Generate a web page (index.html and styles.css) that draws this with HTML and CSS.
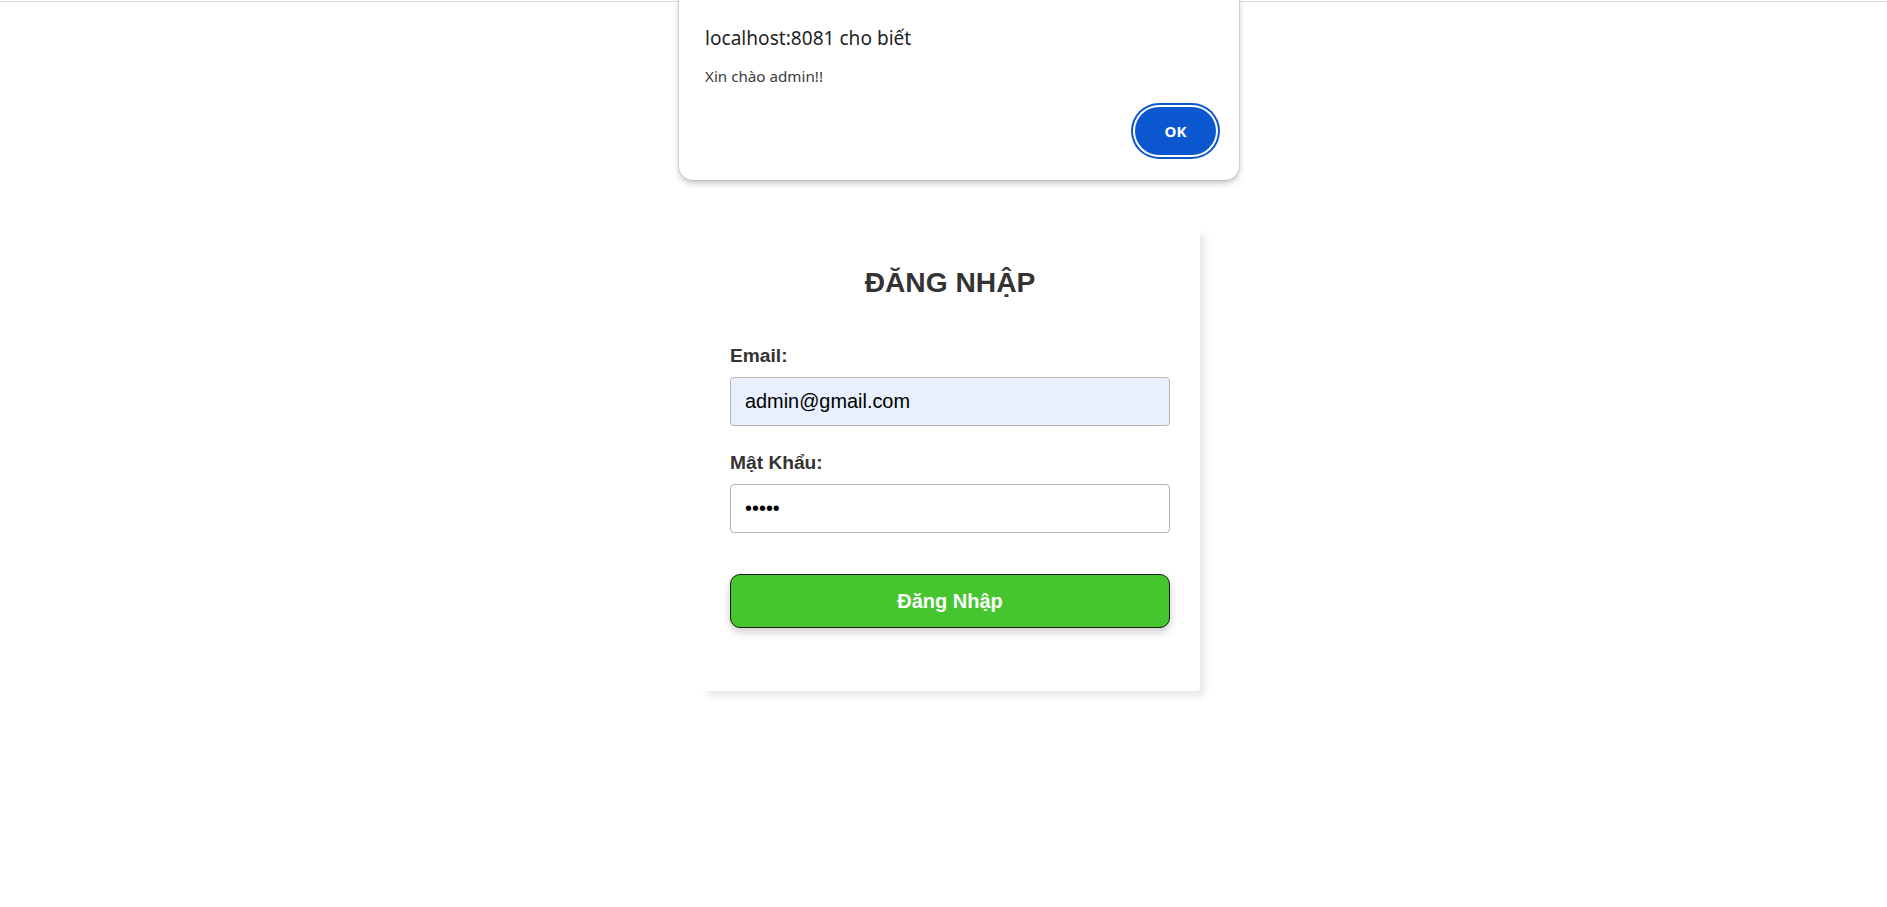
FILE: index.html
```html
<!DOCTYPE html>
<html lang="vi">
<head>
<meta charset="utf-8">
<title>Đăng nhập</title>
<link rel="stylesheet" href="styles.css">
</head>
<body>
<div class="topbar"></div>
<main class="page">
  <form class="card">
    <h2 class="card-title">ĐĂNG NHẬP</h2>
    <div class="field">
      <label class="field-label" for="email">Email:</label>
      <input class="field-input autofilled" id="email" type="email" value="admin@gmail.com">
    </div>
    <div class="field">
      <label class="field-label" for="pw">Mật Khẩu:</label>
      <input class="field-input" id="pw" type="password" value="admin">
    </div>
    <button class="submit" type="button">Đăng Nhập</button>
  </form>
</main>
<div class="dialog">
  <div class="dialog-title">localhost:8081 cho biết</div>
  <div class="dialog-msg">Xin chào admin!!</div>
  <div class="dialog-actions">
    <button class="dialog-ok" type="button">OK</button>
  </div>
</div>
</body>
</html>
```
FILE: styles.css
```css
* { box-sizing: border-box; }
html, body {
  margin: 0;
  padding: 0;
  background: #fff;
}
body {
  font-family: "Liberation Sans", Arial, sans-serif;
  color: #333;
  min-height: 907px;
}
.topbar {
  margin-top: 1px;
  height: 1px;
  background: #dedede;
}
.page {
  display: flex;
  justify-content: center;
  padding-top: 226px;
  padding-left: 13px;
}
.card {
  width: 500px;
  padding: 38px 30px 63px;
  background: #fff;
  border-radius: 4px;
  box-shadow: 6px 6px 7px -1px rgba(0, 0, 0, 0.09);
  display: flex;
  flex-direction: column;
}
.card-title {
  margin: 0 0 46px;
  font-size: 28.2px;
  line-height: 33px;
  font-weight: bold;
  text-align: center;
  color: #333;
}
.field {
  display: flex;
  flex-direction: column;
  gap: 10px;
  margin-bottom: 26px;
}
.field + .field { margin-bottom: 0; }
.field-label {
  font-size: 19.2px;
  line-height: 22px;
  font-weight: bold;
  color: #333;
}
.field-input {
  width: 100%;
  height: 49px;
  padding: 0 14px;
  border: 1px solid #b3b3b3;
  border-radius: 4px;
  font-family: "Liberation Sans", Arial, sans-serif;
  font-size: 19.9px;
  color: #000;
  background: #fff;
  outline: none;
}
.autofilled { background: #e8f0fe; }
.submit {
  margin-top: 41px;
  height: 54px;
  width: 100%;
  background: #45c52e;
  border: 1px solid #1a1a1a;
  border-radius: 10px;
  color: #fff;
  font-family: "Liberation Sans", Arial, sans-serif;
  font-size: 20px;
  font-weight: bold;
  box-shadow: 0 4px 8px rgba(0, 0, 0, 0.2);
}
.dialog {
  position: absolute;
  left: 679px;
  top: -12px;
  width: 560px;
  height: 192px;
  padding: 37px 23px 0 26px;
  background: #fff;
  border-radius: 14px;
  box-shadow: 0 0 0 1px rgba(0, 0, 0, 0.07), 0 3px 6px rgba(0, 0, 0, 0.25);
  font-family: "Noto Sans", "Open Sans", sans-serif;
  display: flex;
  flex-direction: column;
}
.dialog-title {
  font-size: 19.1px;
  line-height: 26px;
  color: #1f1f1f;
}
.dialog-msg {
  margin-top: 15px;
  font-size: 15.2px;
  line-height: 20px;
  color: #3c3c3c;
}
.dialog-actions {
  display: flex;
  justify-content: flex-end;
  margin-top: 21px;
}
.dialog-ok {
  width: 81px;
  height: 48px;
  border: none;
  border-radius: 24px;
  background: #0b57d0;
  color: #fff;
  font-family: "Noto Sans", "Open Sans", sans-serif;
  font-size: 15px;
  font-weight: bold;
  box-shadow: 0 0 0 2px #fff, 0 0 0 4px #0b57d0;
}
```
